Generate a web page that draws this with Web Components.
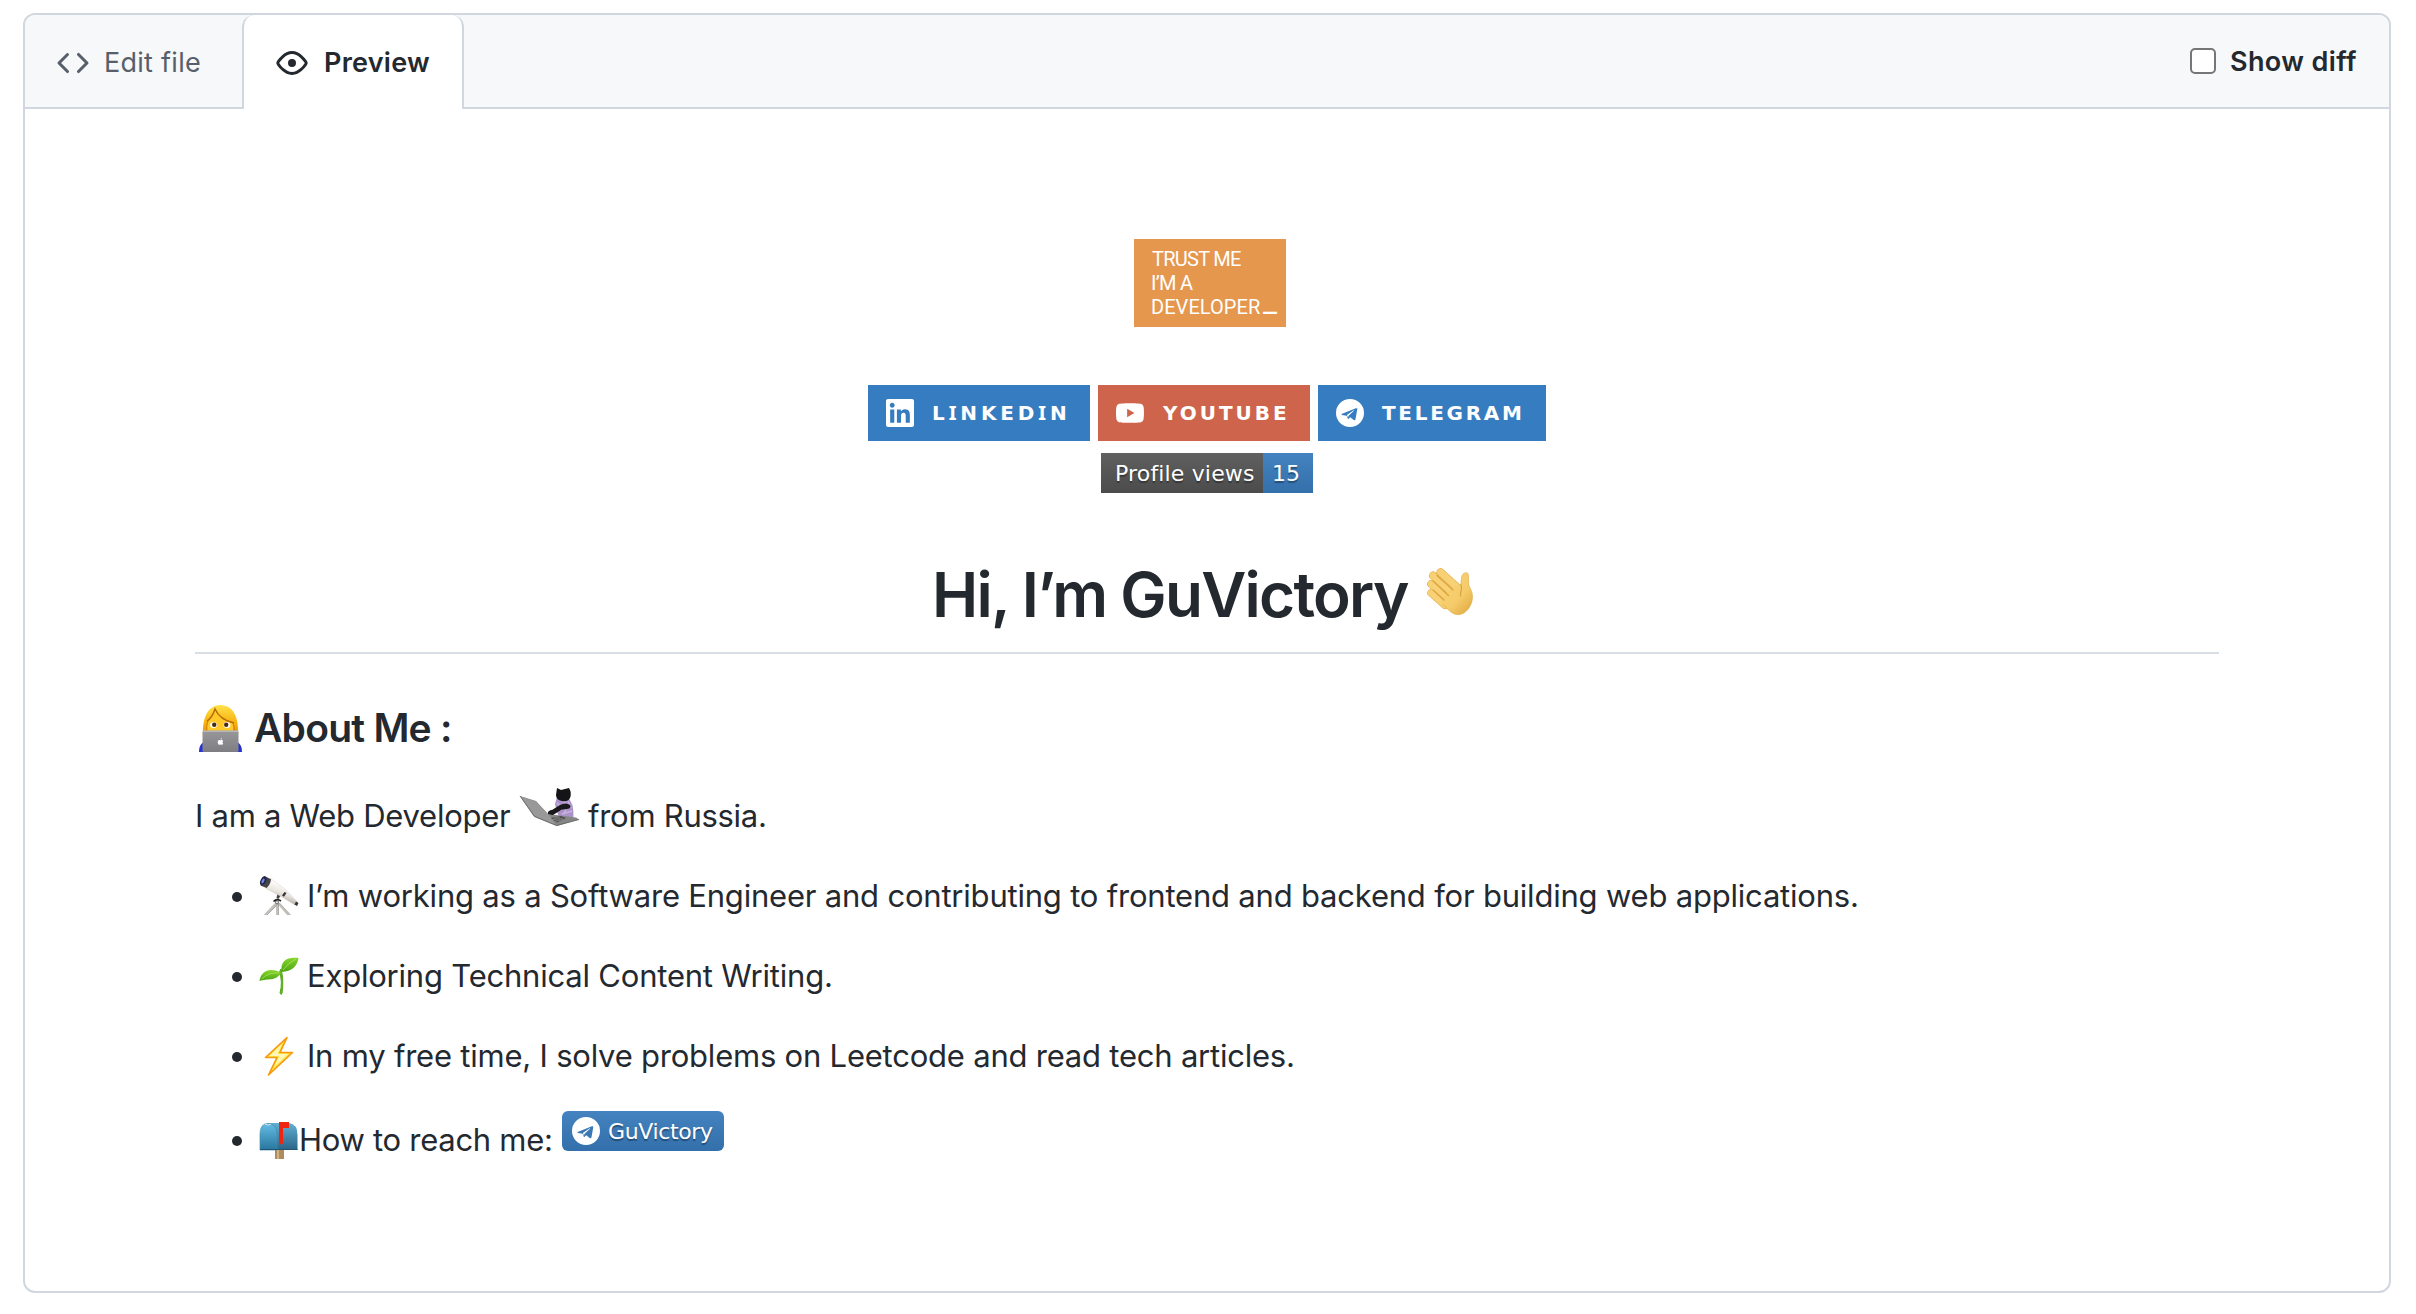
<!DOCTYPE html>
<html lang="en">
<head>
<meta charset="utf-8">
<title>Preview</title>
<style>
  html, body { margin: 0; background: #fff; }
  body { font-family: Inter, "Liberation Sans", sans-serif; color: #24292f; }
</style>
</head>
<body>
<preview-page></preview-page>
<script>
/* Text set to an exact ink width: tracking is spread over the gaps between letters. */
class FitText extends HTMLElement {
  connectedCallback() {
    const root = this.attachShadow({ mode: 'open' });
    root.innerHTML = `<style>
      :host { display: block; flex: none; white-space: pre; }
      span { display: inline-block; white-space: pre; }
    </style><span><slot></slot></span>`;
    requestAnimationFrame(() => this.fit());
    this.fit();
  }
  fit() {
    const span = this.shadowRoot.querySelector('span');
    span.style.letterSpacing = '0px';
    const cs = getComputedStyle(this);
    const ctx = document.createElement('canvas').getContext('2d');
    ctx.font = `${cs.fontWeight} ${cs.fontSize} ${cs.fontFamily}`;
    const text = this.textContent;
    const m = ctx.measureText(text);
    const width = span.getBoundingClientRect().width;
    if (!width) return;
    const left = -m.actualBoundingBoxLeft;
    const right = m.width - m.actualBoundingBoxRight;
    const target = +this.getAttribute('w');
    const gap = (target - (width - left - right)) / (text.length - 1);
    span.style.letterSpacing = gap + 'px';
    span.style.marginLeft = -left + 'px';
    this.style.width = target + 'px';
  }
}

const ICONS = {
  code: ['0 0 16 16', '<path d="M4.72 3.22a.75.75 0 011.06 1.06L2.06 8l3.72 3.72a.75.75 0 11-1.06 1.06L.47 8.53a.75.75 0 010-1.06l4.25-4.25zm6.56 0a.75.75 0 10-1.06 1.06L13.94 8l-3.72 3.72a.75.75 0 101.06 1.06l4.25-4.25a.75.75 0 000-1.06l-4.25-4.25z"/>'],
  eye: ['0 0 16 16', '<path fill-rule="evenodd" d="M1.679 7.932c.412-.621 1.242-1.75 2.366-2.717C5.175 4.242 6.527 3.5 8 3.5c1.473 0 2.824.742 3.955 1.715 1.124.967 1.954 2.096 2.366 2.717a.119.119 0 010 .136c-.412.621-1.242 1.75-2.366 2.717C10.825 11.758 9.473 12.5 8 12.5c-1.473 0-2.824-.742-3.955-1.715C2.92 9.818 2.09 8.69 1.679 8.068a.119.119 0 010-.136zM8 2c-1.981 0-3.67.992-4.933 2.078C1.797 5.169.88 6.423.43 7.1a1.619 1.619 0 000 1.798c.45.678 1.367 1.932 2.637 3.024C4.329 13.008 6.019 14 8 14c1.981 0 3.67-.992 4.933-2.078 1.27-1.091 2.187-2.345 2.637-3.023a1.619 1.619 0 000-1.798c-.45-.678-1.367-1.932-2.637-3.023C11.671 2.992 9.981 2 8 2zm0 8a2 2 0 100-4 2 2 0 000 4z"/>'],
  linkedin: ['0 0 24 24', '<path d="M20.447 20.452h-3.554v-5.569c0-1.328-.027-3.037-1.852-3.037-1.853 0-2.136 1.445-2.136 2.939v5.667H9.351V9h3.414v1.561h.046c.477-.9 1.637-1.85 3.37-1.85 3.601 0 4.267 2.37 4.267 5.455v6.286zM5.337 7.433c-1.144 0-2.063-.926-2.063-2.065 0-1.138.92-2.063 2.063-2.063 1.14 0 2.064.925 2.064 2.063 0 1.139-.925 2.065-2.064 2.065zm1.782 13.019H3.555V9h3.564v11.452zM22.225 0H1.771C.792 0 0 .774 0 1.729v20.542C0 23.227.792 24 1.771 24h20.451C23.2 24 24 23.227 24 22.271V1.729C24 .774 23.2 0 22.222 0h.003z"/>'],
  youtube: ['0 0 24 24', '<path d="M23.498 6.186a3.016 3.016 0 0 0-2.122-2.136C19.505 3.545 12 3.545 12 3.545s-7.505 0-9.377.505A3.017 3.017 0 0 0 .502 6.186C0 8.07 0 12 0 12s0 3.93.502 5.814a3.016 3.016 0 0 0 2.122 2.136c1.871.505 9.376.505 9.376.505s7.505 0 9.377-.505a3.015 3.015 0 0 0 2.122-2.136C24 15.93 24 12 24 12s0-3.93-.502-5.814zM9.545 15.568V8.432L15.818 12l-6.273 3.568z"/>'],
  telegram: ['0 0 24 24', '<path fill-rule="evenodd" d="M12 0a12 12 0 1 0 0 24a12 12 0 1 0 0-24zM4.800 12.900L17 8Q18.600 7.400 18.200 9L16.700 17.400Q16.400 18.700 15.200 17.900L12.200 15.700L10.800 17Q10.300 17.500 10.100 16.900L9 14.300L5.200 13.700Q4.200 13.400 4.800 12.900zM10.300 16.200L10.600 14.500L15.600 9.900Q15.500 9.500 14.900 9.800L9.300 13.700z"/>'],

  wave: ['0 0 46 47', `<defs><linearGradient id="g" x1="0" y1="0" x2=".8" y2="1"><stop offset="0" stop-color="#fbd476"/><stop offset=".65" stop-color="#f5cb6a"/><stop offset="1" stop-color="#e2ad45"/></linearGradient></defs>
    <g fill="none" stroke-linecap="round">
    <path d="M4.300 24.800L18 37M4.200 16L24 32" stroke="#e3b04a" stroke-width="8"/><path d="M4.300 24.800L18 37M4.200 16L24 32" stroke="#f8d075" stroke-width="6.800"/>
    <path d="M6 7.600L28 27M13.500 4.300L32 21" stroke="#e3b04a" stroke-width="8"/><path d="M6 7.600L28 27M13.500 4.300L32 21" stroke="#f8d075" stroke-width="6.800"/></g>
    <path d="M16 27L30 17L33.500 17.500C34.500 14 34 11 35 8C36 4.500 40.800 3.500 41.300 6.500C41.700 9 41 14 42 18C44 22 46.500 26 45 33C43 41 37 47.500 29.500 46.500C26 46 23 43.500 20.500 41L14 35z" fill="url(#g)"/>
    <path d="M33.500 17.500C34.500 14 34 11 35 8C36 4.500 40.800 3.500 41.300 6.500C41.700 9 41 14 42 18C44 22 46.500 26 45 33C43 41 37 47.500 29.500 46.500C26 46 23 43.500 20.500 41L15 36" fill="none" stroke="#e0ad48" stroke-width=".7"/>
    <path d="M10 7.500L26 22M6 13L21.500 27.500M6 22L17 32M34 17C36 20 33 23 33.500 28" fill="none" stroke="#dba53f" stroke-width="1.300" stroke-linecap="round"/>`],
  technologist: ['0 0 43 47', `<defs><linearGradient id="g" x1="0" y1="0" x2="0" y2="1"><stop offset="0" stop-color="#ffe24a"/><stop offset=".5" stop-color="#f9b616"/><stop offset="1" stop-color="#eb9200"/></linearGradient><linearGradient id="l" x1="0" y1="0" x2="0" y2="1"><stop offset="0" stop-color="#98989b"/><stop offset="1" stop-color="#7e7e82"/></linearGradient></defs>
    <path d="M0 47C0 41 2 38 7 36H36C41 38 43 41 43 47z" fill="#2832d2"/>
    <path d="M4 31C3 17 7 0 21.500 0C35 0 40 14 39 31z" fill="url(#g)"/>
    <path d="M8 28V16Q13 14 16 6Q22 16 34 17.500V28z" fill="#ffc928"/>
    <path d="M8 16Q13 13 16 4Q21 15 35 18" fill="none" stroke="#b76b08" stroke-width="1.500"/>
    <path d="M9 16Q7 20 8 28M34 18Q36 22 35 28" fill="none" stroke="#cf7b0b" stroke-width="1"/>
    <ellipse cx="14.500" cy="20" rx="3.400" ry="2.900" fill="#fff"/><ellipse cx="28" cy="20" rx="3.400" ry="2.900" fill="#fff"/>
    <circle cx="15.200" cy="19.700" r="2.200" fill="#4b2a12"/><circle cx="27.200" cy="19.700" r="2.200" fill="#4b2a12"/>
    <rect x="3.500" y="25.500" width="36" height="21.500" rx="1.500" fill="url(#l)"/><path d="M4 26.200H39" stroke="#c7c7c9"/>
    <path d="M21.400 35.200C19 34.500 18 37 19.200 38.900C20.400 40.500 21 39.500 21.700 39.600S23.200 40.500 24.200 38.600Q22.700 37.500 24 35.700C23.200 34.700 22.300 35.300 21.400 35.200zM21.500 34.700Q21.700 33.200 23 32.900Q23 34.500 21.500 34.700z" fill="#fff"/>`],
  cat: ['0 0 59 38', `<path d="M37 9L47 9Q54 14 53.500 29L40 31Q36 22 35 16z" fill="#ab93c9"/>
    <path d="M37 15L40 18L37 22M43 12L47 18L44 26M48 13L51 20M42 26L52 23" stroke="#c8b3df" stroke-width="1.500" fill="none"/>
    <path d="M37 0L41 2Q45 1 49 0Q52 5 50 10Q48 14 42 13Q36 12 36 7z" fill="#141416"/>
    <path d="M50 17Q52 20 47 21L39 22L32 27L28 26Q27 23 32 22L40 17Q46 14 50 17z" fill="#19191b"/>
    <path d="M0 8L16 13L28 26L56 29.500L59 31.500L37 38L14 28.500z" fill="#858585"/>
    <path d="M1 8.500L15.500 13.500L29 27L35 36.500L14.500 28z" fill="#999"/>
    <path d="M31 30L41 28L46 30L37 34.500z" fill="#4c4c4e"/>
    <path d="M33 31l8 2M35 29.500l8 2M31 32l9-3M34 34l9-4" stroke="#898989" stroke-width=".7"/>
    <path d="M28 26Q28 22 33 22L40 19L41 22L33 27z" fill="#19191b"/>
    <path d="M0 8L14.500 28.500L36.500 37.500L59 31.500" stroke="#666" stroke-width=".9" fill="none"/>`],
  telescope: ['0 0 40 40', `<defs><linearGradient id="g" x1=".6" y1=".3" x2=".4" y2=".8"><stop offset="0" stop-color="#fbfaf8"/><stop offset=".5" stop-color="#e9e5df"/><stop offset="1" stop-color="#b5aea6"/></linearGradient></defs>
    <path d="M16 27L4.500 39H8L18.500 29zM17 26V39H19.500V26zM18.500 28L28 39H31.500L20.500 27z" fill="#c4c1bc"/>
    <path d="M18.300 28.500L8 39M19.500 28V39M20.500 27L31.500 39" stroke="#8b8986" stroke-width=".6"/>
    <path d="M18.500 17L17.500 22L19.500 23L22 19z" fill="#444"/><path d="M14.500 25.500Q18 22 22 25" stroke="#222" stroke-width="1.600" fill="none"/><circle cx="18" cy="26.300" r="1.600" fill="#e5e5e5" stroke="#333" stroke-width=".7"/>
    <path d="M11.500 2.500L26 13L38 25.500L36 29L22 20.500L7 12.500z" fill="url(#g)" stroke="#d0cbc5" stroke-width=".4"/>
    <path d="M5.500 0L12 3.200Q11.500 8.500 7.500 12L1.500 9.500Q1 2.500 5.500 0z" fill="#454547"/><ellipse cx="4.300" cy="4.800" rx="2.700" ry="4.700" transform="rotate(28 4.300 4.800)" fill="#24244e"/><ellipse cx="4" cy="5" rx="1.200" ry="2.600" transform="rotate(28 4 5)" fill="#6f8ee0"/>
    <path d="M25.500 16L23 19.500L25 20.700L27.500 17zM37 25.500L39.500 27L38 30L35.500 28.500z" fill="#343436"/>`],
  seedling: ['0 0 40 38', `<defs><linearGradient id="g" x1="0" y1="0" x2="0" y2="1"><stop offset="0" stop-color="#86d52c"/><stop offset="1" stop-color="#4aa511"/></linearGradient></defs>
    <path d="M22 12Q25 23 23 36.500Q22 38.500 21 36Q24 25 20.500 15z" fill="#68bd25" stroke="#55a61a" stroke-width="1"/>
    <path d="M22.500 15C21 3 29-.5 39.500 1C38 10 33 14 22.500 15z" fill="url(#g)"/>
    <path d="M.5 24C2 14 10 10 22 15.500C17 25 9 21 .5 24z" fill="url(#g)"/>
    <path d="M24 13Q29 6 37 2M3 22Q9 15 20 16" stroke="#b0e35a" stroke-width=".8" fill="none"/>`],
  bolt: ['0 0 40 40', `<path d="M28 1.500L6.500 21.500H18L9.500 39L33.500 16.500H21z" fill="#ffe545" stroke="#f79a10" stroke-width="1.700" stroke-linejoin="round"/><path d="M23 8L10.500 20H20.500L15 31L29 18H18.500z" fill="#fff8b8"/>`],
  mailbox: ['0 0 40 38', `<defs><linearGradient id="g" x1="0" y1="0" x2="0" y2="1"><stop offset="0" stop-color="#64bde4"/><stop offset="1" stop-color="#28759e"/></linearGradient><linearGradient id="l" x1="0" y1="0" x2="0" y2="1"><stop offset="0" stop-color="#62afd3"/><stop offset="1" stop-color="#296487"/></linearGradient></defs>
    <path d="M16 28H25V38H16z" fill="#b08b5b"/><path d="M18 28H20V38H18z" fill="#d2b484"/>
    <path d="M8 2H30Q38.500 3 38.500 14V29H17z" fill="url(#l)"/>
    <path d="M1 29V13Q1 2.500 9 2.500Q18 3 18 14V29z" fill="url(#g)" stroke="#438fae" stroke-width=".7"/><path d="M6 3.200Q9 4.800 12 3.200" stroke="#d5e4e9" fill="none"/>
    <path d="M1 28.500H38.500" stroke="#22556f" stroke-width="1"/>
    <path d="M20 1H30V7H24V22Q22 25 20 22z" fill="#ef2512"/>`]
};

/* One picture by name; its size comes from the w and h attributes. */
class ArtIcon extends HTMLElement {
  connectedCallback() {
    const [box, body] = ICONS[this.getAttribute('name')];
    const w = this.getAttribute('w'), h = this.getAttribute('h') || w;
    this.attachShadow({ mode: 'open' }).innerHTML = `<style>
      :host { display: block; flex: none; width: ${w}px; height: ${h}px; }
      svg { display: block; width: 100%; height: 100%; fill: currentColor; overflow: visible; }
    </style><svg viewBox="${box}" preserveAspectRatio="none" aria-hidden="true">${body}</svg>`;
  }
}

/* Flat, upper-case link badge. */
class LinkBadge extends HTMLElement {
  connectedCallback() {
    this.attachShadow({ mode: 'open' }).innerHTML = `<style>
      :host { display: flex; flex: none; box-sizing: border-box; height: 56px; align-items: center; padding: 0 0 0 18px; gap: 18px;
        color: #fff; font: bold 20px/26px "DejaVu Sans", sans-serif; }
    </style><art-icon name="${this.getAttribute('icon')}" w="28"></art-icon><slot></slot>`;
  }
}

/* Tab in the file header. */
class FileTab extends HTMLElement {
  connectedCallback() {
    this.attachShadow({ mode: 'open' }).innerHTML = `<style>
      :host { display: flex; box-sizing: border-box; height: 94px; align-items: center; gap: 17px;
        font-size: 27px; line-height: 36px; color: #57606a; padding: 1px 0 0 32px; width: 217px; }
      :host([selected]) { width: 222px; color: #24292f; font-weight: 600; background: #fff;
        border: 2px solid #d0d7de; border-width: 0 2px; border-radius: 12px 12px 0 0; }
    </style><art-icon name="${this.getAttribute('icon')}" w="32"></art-icon><slot></slot>`;
  }
}

class ListRow extends HTMLElement {
  connectedCallback() {
    this.attachShadow({ mode: 'open' }).innerHTML = `<style>
      :host { display: flex; height: 40px; align-items: center; padding-left: 37px; }
      i { flex: none; width: 10px; height: 10px; border-radius: 50%; background: #24292f; margin: 2px 17px 0 0; }
    </style><i></i><slot></slot>`;
  }
}

class PreviewPage extends HTMLElement {
  connectedCallback() {
    this.attachShadow({ mode: 'open' }).innerHTML = `<style>
      :host { display: block; box-sizing: border-box; height: 1314px; padding: 13px 25px 21px 23px; }
      .panel { box-sizing: border-box; height: 1280px; border: 2px solid #d0d7de; border-radius: 12px; overflow: hidden; background: #fff; }
      header { display: flex; height: 94px; background: linear-gradient(#d0d7de, #d0d7de) bottom / 100% 2px no-repeat #f6f8fa; }
      .diff { display: flex; margin-left: auto; height: 92px; align-items: center; gap: 15px; padding-right: 32px;
        font-weight: 600; font-size: 27px; line-height: 36px; }
      .check { box-sizing: border-box; width: 26px; height: 26px; border: 2px solid #767676; border-radius: 5px; background: #fff; }
      main { display: flex; flex-direction: column; padding: 130px 170px 0; }
      .trust { align-self: center; box-sizing: border-box; width: 152px; height: 88px; margin-left: 6px; padding: 8px 0 0 18px;
        background: #e5974e; color: #fff; font: 20px/24px Roboto, sans-serif; }
      .line { display: flex; gap: 3px; height: 24px; }
      .cursor { width: 14px; height: 24px; font-size: 31px; line-height: 14px; }
      .row { display: flex; align-items: center; justify-content: center; }
      .badges { gap: 8px; margin-top: 58px; }
      .blue { background: #367cc0; } .red { background: #cf644c; }
      .serif { font-family: "Noto Sans"; font-weight: 700; }
      .views { margin-top: 12px; color: #fff; font: 22px/30px "DejaVu Sans", sans-serif; text-shadow: 0 2px 1px rgba(0,0,0,.35); }
      .views div { display: flex; align-items: center; height: 40px; box-sizing: border-box; padding-top: 1px; }
      .k { width: 162px; padding-left: 16px; background: linear-gradient(#606060, #4b4b4b); }
      .v { width: 50px; padding-left: 11px; background: linear-gradient(#4583c0, #326fab); }
      h1 { margin: 47px 0 0; height: 109px; padding: 0 5px 3px 0; border-bottom: 2px solid #d8dee4; gap: 18px; font-size: 62px; line-height: 80px; font-weight: 600; }
      h3 { margin: 50px 0 0; height: 48px; display: flex; align-items: center; padding-left: 4px; gap: 12px; font-size: 39px; line-height: 48px; font-weight: 600; }
      .text { font-size: 31px; line-height: 40px; }
      p { margin: 44px 0 0; padding-left: 2px; display: flex; height: 40px; align-items: center; gap: 9px; }
      .cat { margin-bottom: 18px; margin-left: 1px; }
      .list { display: flex; flex-direction: column; gap: 40px; margin-top: 40px; }
      .last { margin-top: 4px; }
      .contact { flex: none; box-sizing: border-box; display: flex; align-items: center; gap: 9px; width: 162px; height: 40px; margin: 0 0 18px 11px; padding-left: 10px;
        border-radius: 6px; background: linear-gradient(#4583c0, #326fab); color: #fff; font: 22px/30px "DejaVu Sans", sans-serif; }
      .contact fit-text { text-shadow: 0 2px 1px rgba(0,0,0,.35); padding-top: 1px; }
    </style>
    <div class="panel">
      <header>
        <file-tab icon="code"><fit-text w="94">Edit file</fit-text></file-tab>
        <file-tab icon="eye" selected><fit-text w="105">Preview</fit-text></file-tab>
        <div class="diff"><div class="check"></div><fit-text w="126" style="padding-top:1px">Show diff</fit-text></div>
      </header>
      <main>
        <div class="trust"><fit-text w="89">TRUST ME</fit-text><fit-text w="41">I’M A</fit-text><div class="line"><fit-text w="108">DEVELOPER</fit-text><span class="cursor">_</span></div></div>
        <div class="row badges">
          <link-badge class="blue" icon="linkedin" style="width:222px"><fit-text w="132" style="margin-left:1px">L<span class="serif">I</span>NKED<span class="serif">I</span>N</fit-text></link-badge>
          <link-badge class="red" icon="youtube" style="width:212px"><fit-text w="124">YOUTUBE</fit-text></link-badge>
          <link-badge class="blue" icon="telegram" style="width:228px"><fit-text w="139">TELEGRAM</fit-text></link-badge>
        </div>
        <div class="row views"><div class="k"><fit-text w="137">Profile views</fit-text></div><div class="v"><fit-text w="25">15</fit-text></div></div>
        <h1 class="row"><fit-text w="473">Hi, I’m GuVictory</fit-text><art-icon name="wave" w="46" h="47" style="margin-bottom:6px"></art-icon></h1>
        <h3><art-icon name="technologist" w="43" h="47"></art-icon><fit-text w="196">About Me :</fit-text></h3>
        <p class="text"><fit-text w="313">I am a Web Developer</fit-text><art-icon class="cat" name="cat" w="59" h="38"></art-icon><fit-text w="177">from Russia.</fit-text></p>
        <div class="list text">
          <list-row><art-icon name="telescope" w="40" h="40"></art-icon><fit-text w="1548" style="margin-left:10px">I’m working as a Software Engineer and contributing to frontend and backend for building web applications.</fit-text></list-row>
          <list-row><art-icon name="seedling" w="40" h="38"></art-icon><fit-text w="522" style="margin-left:10px">Exploring Technical Content Writing.</fit-text></list-row>
          <list-row><art-icon name="bolt" w="40" h="40"></art-icon><fit-text w="984" style="margin-left:10px">In my free time, I solve problems on Leetcode and read tech articles.</fit-text></list-row>
          <list-row class="last"><art-icon name="mailbox" w="40" h="38"></art-icon><fit-text w="250" style="margin-left:2px">How to reach me:</fit-text>
            <div class="contact"><art-icon name="telegram" w="28"></art-icon><fit-text w="104">GuVictory</fit-text></div></list-row>
        </div>
      </main>
    </div>`;
  }
}

customElements.define('fit-text', FitText);
customElements.define('art-icon', ArtIcon);
customElements.define('link-badge', LinkBadge);
customElements.define('file-tab', FileTab);
customElements.define('list-row', ListRow);
customElements.define('preview-page', PreviewPage);
</script>
</body>
</html>
